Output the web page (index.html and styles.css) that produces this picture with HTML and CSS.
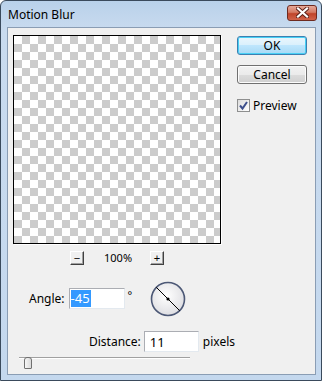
FILE: index.html
```html
<!DOCTYPE html>
<html lang="en">
<head>
  <meta charset="UTF-8" />
  <title>Motion Blur</title>
  <link rel="stylesheet" href="styles.css">
</head>
<body>
  <div class="window">
    <div class="titlebar">
      <span class="title">Motion Blur</span>
      <button class="close" aria-label="Close">
        <svg width="13" height="11" viewBox="0 0 13 11">
          <path d="M2 1.5 L11 9.5 M11 1.5 L2 9.5" stroke="#5a2018" stroke-width="4" stroke-linecap="square"/>
          <path d="M2 1.5 L11 9.5 M11 1.5 L2 9.5" stroke="#fff" stroke-width="2.2" stroke-linecap="square"/>
        </svg>
      </button>
    </div>

    <div class="client">
      <div class="top">
        <div class="preview-col">
          <div class="preview"></div>
          <div class="zoom-row">
            <button class="zoom-btn">&minus;</button>
            <span class="zoom-value">100%</span>
            <button class="zoom-btn">+</button>
          </div>
        </div>

        <div class="actions">
          <button class="btn btn-default">OK</button>
          <button class="btn">Cancel</button>
          <label class="check">
            <span class="check-box">
              <svg width="11" height="11" viewBox="0 0 11 11">
                <path d="M2 5.5 L4.5 8.5 L9 2" fill="none" stroke="#3d4f8c" stroke-width="2"/>
              </svg>
            </span>
            Preview
          </label>
        </div>
      </div>

      <div class="angle-row">
        <span class="label">Angle:</span>
        <span class="field"><span class="selected">-45</span></span>
        <span class="degree">°</span>
        <svg class="dial" width="36" height="36" viewBox="0 0 36 36">
          <defs>
            <radialGradient id="dialFill" cx="0.45" cy="0.4" r="0.6">
              <stop offset="0" stop-color="#ffffff"/>
              <stop offset="1" stop-color="#dedee2"/>
            </radialGradient>
          </defs>
          <circle cx="18" cy="18" r="16.5" fill="url(#dialFill)" stroke="#4c5876" stroke-width="1.6"/>
          <line x1="6.3" y1="6.3" x2="29.7" y2="29.7" stroke="#000" stroke-width="1"/>
          <circle cx="18" cy="18" r="1.6" fill="#000"/>
        </svg>
      </div>

      <div class="distance-row">
        <span class="label">Distance:</span>
        <span class="field">11</span>
        <span class="unit">pixels</span>
      </div>

      <div class="slider">
        <div class="track"></div>
        <div class="thumb"></div>
      </div>
    </div>
  </div>
</body>
</html>
```

FILE: styles.css
```css
body {
  margin: 0;
  font-family: 'Noto Sans', sans-serif;
  font-size: 12px;
  color: #000;
  background: #fff;
}

.window {
  box-sizing: border-box;
  width: 322px;
  height: 381px;
  display: flex;
  flex-direction: column;
  border: 1px solid #3a4a5c;
  border-radius: 6px 6px 0 0;
  background: linear-gradient(to bottom, #b9d1ea, #c9dbef 30px, #c4d8ee);
}

.titlebar {
  height: 26px;
  display: flex;
  align-items: center;
  padding: 0 4px 0 7px;
}

.title {
  font-size: 12px;
  color: #000;
  margin-top: 1px;
}

.close {
  margin-left: auto;
  margin-top: -3px;
  width: 30px;
  height: 16px;
  padding: 0;
  display: flex;
  align-items: center;
  justify-content: center;
  border: 1px solid #6e2a20;
  border-radius: 3px;
  background: linear-gradient(to bottom, #e6a898, #d47a64 45%, #c0442a 55%, #d0634a);
}

.client {
  flex: 1;
  margin: 0 5px 5px 6px;
  border: 1px solid #8a9db4;
  background: #f0f0f0;
  padding: 7px 0 0 5px;
}

.top {
  display: flex;
  gap: 16px;
}

.preview-col {
  display: flex;
  flex-direction: column;
}

.preview {
  box-sizing: border-box;
  width: 208px;
  height: 209px;
  border: 1px solid #000;
  background: conic-gradient(#cccccc 25%, #ffffff 0 50%, #cccccc 0 75%, #ffffff 0);
  background-size: 16px 16px;
  box-shadow: 1px 1px 0 #ffffff;
}

.zoom-row {
  display: flex;
  align-items: center;
  justify-content: center;
  gap: 20px;
  margin-top: 6px;
}

.zoom-btn {
  box-sizing: border-box;
  width: 14px;
  height: 14px;
  padding: 0;
  font-family: 'Liberation Sans', sans-serif;
  font-size: 11px;
  line-height: 10px;
  background: #f0f0f0;
  border: 1px solid;
  border-color: #ffffff #404040 #404040 #ffffff;
  box-shadow: inset -1px -1px 0 #a0a0a0;
}

.zoom-value {
  font-size: 11px;
  width: 26px;
  text-align: center;
}

.actions {
  width: 70px;
  margin-top: 1px;
  display: flex;
  flex-direction: column;
}

.btn {
  box-sizing: border-box;
  height: 19px;
  padding: 0;
  font-family: 'Noto Sans', sans-serif;
  font-size: 12px;
  line-height: 15px;
  border: 1px solid #707070;
  border-radius: 3px;
  background: linear-gradient(to bottom, #f2f2f2, #ebebeb 50%, #dddddd 50%, #cfcfcf);
  box-shadow: inset 0 0 0 1px #fcfcfc;
}

.btn + .btn {
  margin-top: 10px;
}

.btn-default {
  border-color: #3c7fb1;
  background: linear-gradient(to bottom, #eaf6fd, #d9f0fc 50%, #bee6fd 50%, #a7d9f5);
  box-shadow: inset 0 0 0 1px #48d0f5;
}

.check {
  display: flex;
  align-items: center;
  gap: 3px;
  margin-top: 13px;
}

.check-box {
  box-sizing: border-box;
  width: 13px;
  height: 13px;
  display: flex;
  align-items: center;
  justify-content: center;
  border: 1px solid #8e8f8f;
  background: linear-gradient(135deg, #dcdcdc, #ffffff);
}

.angle-row {
  display: flex;
  align-items: center;
  margin: 16px 0 0 16px;
  height: 35px;
}

.label {
  margin-right: 4px;
}

.field {
  box-sizing: border-box;
  width: 56px;
  height: 21px;
  display: flex;
  align-items: center;
  padding-left: 1px;
  font-size: 13px;
  background: #fff;
  border: 1px solid #abadb3;
  border-color: #abadb3 #e3e9ef #e3e9ef #abadb3;
}

.selected {
  background: #3399ff;
  color: #fff;
  height: 17px;
  line-height: 17px;
  padding-right: 1px;
}

.degree {
  align-self: flex-start;
  margin: 6px 0 0 3px;
  font-size: 11px;
}

.dial {
  margin-left: 18px;
}

.distance-row {
  display: flex;
  align-items: center;
  margin: 15px 0 0 76px;
}

.distance-row .label {
  margin-right: 3px;
}

.distance-row .field {
  width: 55px;
  padding-left: 5px;
}

.unit {
  margin-left: 4px;
}

.slider {
  position: relative;
  height: 12px;
  width: 171px;
  margin: 5px 0 0 6px;
}

.track {
  margin-top: 5px;
  height: 1px;
  background: #a0a0a0;
  border-bottom: 1px solid #ffffff;
}

.thumb {
  position: absolute;
  left: 5px;
  top: 0;
  box-sizing: border-box;
  width: 8px;
  height: 12px;
  border: 1px solid #707070;
  border-radius: 3px 3px 1px 1px;
  background: linear-gradient(to right, #f6f6f6, #dadada);
}
```
